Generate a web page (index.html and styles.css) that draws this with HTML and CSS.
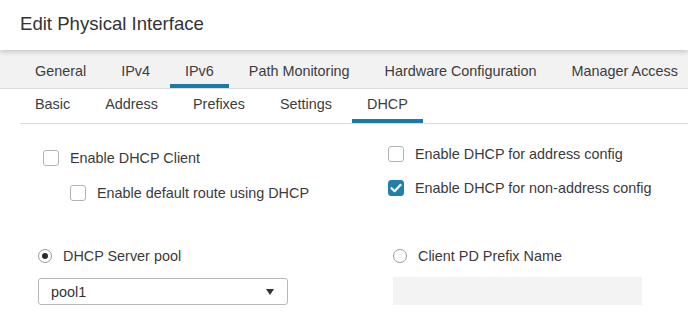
FILE: index.html
```html
<!DOCTYPE html>
<html>
<head>
<meta charset="utf-8">
<link rel="stylesheet" href="styles.css">
</head>
<body>
<div class="title">Edit Physical Interface</div>
<div class="tabbar">
  <div class="tab">General</div>
  <div class="tab">IPv4</div>
  <div class="tab active">IPv6</div>
  <div class="tab">Path Monitoring</div>
  <div class="tab">Hardware Configuration</div>
  <div class="tab">Manager Access</div>
</div>
<div class="subbar">
  <div class="sub">Basic</div>
  <div class="sub">Address</div>
  <div class="sub">Prefixes</div>
  <div class="sub">Settings</div>
  <div class="sub active">DHCP</div>
</div>
<div class="checks">
  <div class="col col-left">
    <label class="row"><span class="box"></span>Enable DHCP Client</label>
    <label class="row nested"><span class="box"></span>Enable default route using DHCP</label>
  </div>
  <div class="col col-right">
    <label class="row"><span class="box"></span>Enable DHCP for address config</label>
    <label class="row"><span class="box checked"><svg width="12" height="10" viewBox="0 0 12 10"><path d="M1.5 5.2 L4.6 8.2 L10.6 1.8" fill="none" stroke="#fff" stroke-width="2.2" stroke-linecap="round" stroke-linejoin="round"/></svg></span>Enable DHCP for non-address config</label>
  </div>
</div>
<div class="pools">
  <div class="pcol">
    <label class="row"><span class="radio on"></span>DHCP Server pool</label>
    <div class="select"><span>pool1</span><span class="caret"></span></div>
  </div>
  <div class="pcol">
    <label class="row"><span class="radio"></span>Client PD Prefix Name</label>
    <div class="input"></div>
  </div>
</div>
</body>
</html>
```
FILE: styles.css
```css
* { box-sizing: border-box; }
html, body { margin: 0; background: #fff; }
body {
  font-family: "Liberation Sans", Arial, sans-serif;
  color: #3a3a3c;
  font-size: 14.4px;
  width: 688px;
  height: 315px;
  overflow: hidden;
}
.title {
  height: 50px;
  padding: 13px 0 0 20px;
  font-size: 18.6px;
  line-height: 22px;
  color: #333;
  background: #fff;
  position: relative;
  z-index: 1;
  box-shadow: 0 2px 5px rgba(0,0,0,0.18);
}
.tabbar {
  display: flex;
  gap: 5px;
  padding-left: 20px;
  background: #f2f2f2;
  border-bottom: 1px solid #dcdcdc;
  height: 39px;
  white-space: nowrap;
  font-size: 14.4px;
}
.tab {
  padding: 12px 15px 0;
  line-height: 18px;
  height: 38px;
  color: #3c3c3e;
}
.tab.active { border-bottom: 4px solid #1b7ba6; }
.subbar {
  display: flex;
  gap: 5px;
  margin-left: 20px;
  border-bottom: 1px solid #dcdcdc;
  height: 35px;
  font-size: 14.4px;
}
.sub {
  padding: 6px 15px 0;
  line-height: 18px;
  height: 34px;
  color: #3c3c3e;
}
.sub.active { border-bottom: 4px solid #1b7ba6; }
.checks {
  display: grid;
  grid-template-columns: 345px 300px;
  padding-left: 43px;
}
.col { display: flex; flex-direction: column; }
.col-left { padding-top: 24px; gap: 15px; }
.col-right { padding-top: 20px; gap: 14px; }
.row {
  display: flex;
  align-items: center;
  height: 20px;
  line-height: 20px;
  white-space: nowrap;
}
.nested { margin-left: 27px; }
.box {
  width: 16px;
  height: 16px;
  border: 1px solid #b3b3b3;
  border-radius: 3px;
  background: #fff;
  margin-right: 11px;
  display: inline-flex;
  align-items: center;
  justify-content: center;
  flex: none;
}
.box.checked { background: #1f7fae; border-color: #1f7fae; }
.pools {
  display: grid;
  grid-template-columns: 355px 300px;
  padding-left: 38px;
  padding-top: 43px;
}
.pcol { display: flex; flex-direction: column; gap: 12px; }
.pcol:last-child { gap: 11px; }
.radio {
  width: 14px;
  height: 14px;
  border: 1px solid #9a9a9a;
  border-radius: 50%;
  margin-right: 11px;
  flex: none;
  display: inline-flex;
  align-items: center;
  justify-content: center;
  background: #fff;
}
.radio.on::after {
  content: "";
  width: 6px;
  height: 6px;
  border-radius: 50%;
  background: #2b2b2b;
}
.select {
  width: 250px;
  height: 27px;
  border: 1px solid #b8b8b8;
  border-radius: 3px;
  display: flex;
  align-items: center;
  justify-content: space-between;
  padding: 0 13px 0 12px;
  color: #333;
}
.caret {
  width: 0;
  height: 0;
  border-left: 4.5px solid transparent;
  border-right: 4.5px solid transparent;
  border-top: 6px solid #333;
}
.input {
  width: 249px;
  height: 28px;
  background: #f3f3f3;
}
```
